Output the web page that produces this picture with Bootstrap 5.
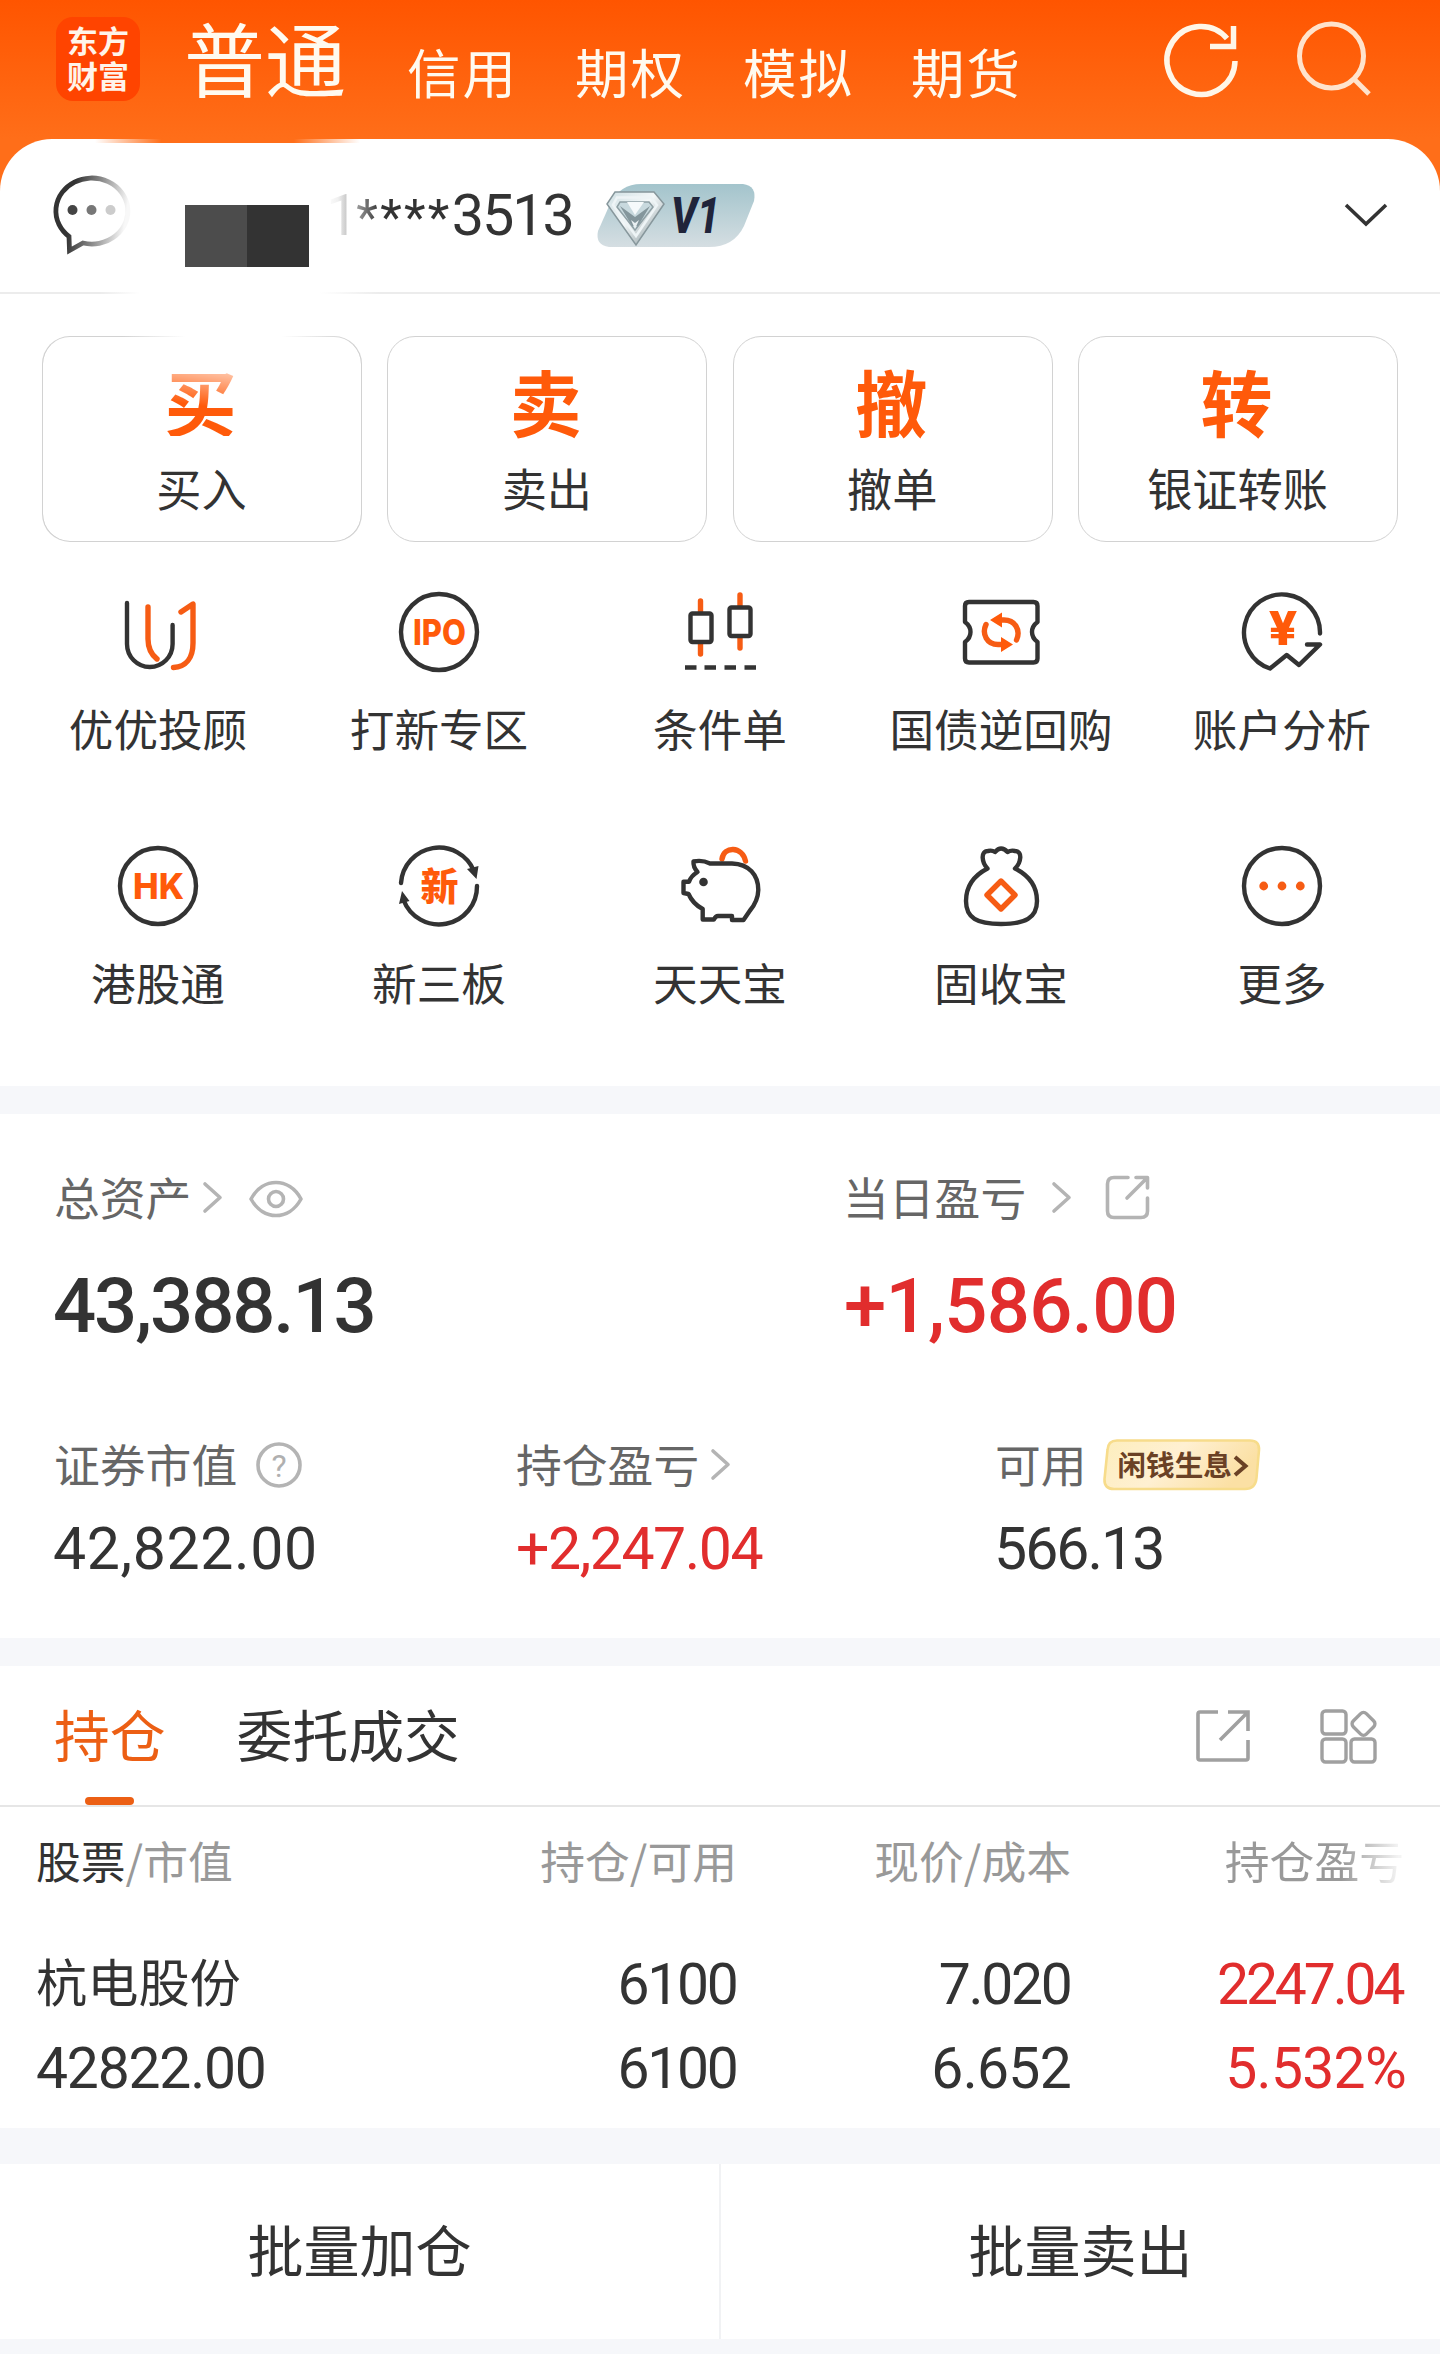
<!DOCTYPE html>
<html lang="zh-CN">
<head>
<meta charset="utf-8">
<meta name="viewport" content="width=device-width, initial-scale=1">
<title>东方财富 - 交易</title>
<link href="https://cdn.jsdelivr.net/npm/bootstrap@5.3.0/dist/css/bootstrap.min.css" rel="stylesheet">
<style>
:root{--ink:#333;--sub:#666;--mute:#999;--brand:#ff5a0a;--up:#e12d2d}
body{font-family:"Noto Sans CJK SC",Roboto,sans-serif;color:var(--ink);line-height:1;background:#fff}
svg{display:block;flex:none;overflow:visible}
.app{width:1440px;height:2354px;overflow:hidden;background:linear-gradient(#ff5500,#ff6e19 139px,#ff6e19 200px,#fff 201px)}
.num{font-family:Roboto,"Noto Sans CJK SC",sans-serif}
.up{color:var(--up)}
.topbar{height:139px;padding:0 68px 0 56px;color:#fffaf0}
.logo{width:84px;height:84px;border-radius:17px;background:#ff4400;margin-top:17px;font:700 31px/35px "Noto Sans CJK SC",sans-serif;color:#fff4ea;text-align:center;padding-top:5px}
.tab-main{font-size:81px;height:118px;line-height:112px;margin-left:44px;width:164px}
.tab-sub{font-size:53.500px;letter-spacing:2px;line-height:141px;width:111px;margin-left:57px;white-space:nowrap}
.tab-first{margin-left:59px}
.sheet{background:#fff;border-radius:52px 52px 0 0;position:relative}
.glow{position:absolute;left:95px;top:0;width:265px;height:4px;background:linear-gradient(90deg,transparent,#ff6e19 25%,#ff6e19 75%,transparent)}
.account{height:153px;padding:0 52px 0 52px}
.redact{width:124px;height:62px;background:linear-gradient(90deg,#4c4c4c 50%,#333 50%);margin:40px 0 0 55px}
.acct{font-size:57.5px;letter-spacing:-2px;line-height:155px;margin:2px 0 0 17px;background:linear-gradient(90deg,#fff 0,#f0f0f0 12px,#333 54px);-webkit-background-clip:text;background-clip:text;color:transparent}
.acct .stars{font-size:50px;letter-spacing:2.300px}
.rule{height:2px;background:linear-gradient(90deg,#ececec 100px,#fff 140px,#fff 320px,#ececec 380px)}
.actions{padding:41.500px 42px 0;gap:25.300px}
.act{flex:1 1 0;height:206px;border:1.5px solid #d2d2d2;border-radius:28px;text-align:center}
.act b{display:block;font-size:72px;line-height:72px;color:var(--brand);margin:27px 3px 0 0;font-weight:700}
.act span{display:block;font-size:45.200px;line-height:50px;margin-top:27px;white-space:nowrap;margin-right:1px}
.act.fade-top{background:linear-gradient(#fff,#fff) padding-box,linear-gradient(90deg,#d2d2d2 25%,#fff 45%,#fff 75%,#d2d2d2 95%) border-box;border-color:transparent #d2d2d2 #d2d2d2}
.fade-top b{background:linear-gradient(188deg,#ffe0d0 15%,#ff5a0a 55%);-webkit-background-clip:text;background-clip:text;color:transparent}
.tools{padding:0 17.5px;margin-top:46.500px;height:498px}
.tool{width:20%;height:254px;font-size:44.6px;text-align:center}
.tool div{line-height:50px;margin-top:26.500px;white-space:nowrap}
.tool svg{margin:0 auto}
.tool svg text{font-family:Inter,Roboto,sans-serif;font-weight:800;fill:#ff5a0a;stroke:none}
.tool svg text.cn{font-family:"Noto Sans CJK SC",sans-serif}
.d{fill:none;stroke:#333;stroke-width:4.4;stroke-linejoin:round;stroke-linecap:round}
.o{fill:none;stroke:#f65c14;stroke-width:5.4;stroke-linejoin:round;stroke-linecap:round}
.g{fill:none;stroke:#b4b4b4;stroke-width:3.6;stroke-linecap:round;stroke-linejoin:round}
.band{height:28px;background:#f6f7fa}
.assets{height:524px;padding:0 54px}
.lbl{font-size:45.800px;color:var(--sub);line-height:44px;height:50px;white-space:nowrap;padding-bottom:2px}
.lbl svg{margin-top:3px}
.big{font-size:76px;font-weight:500;line-height:80px;margin-top:44px}
.mid{font-size:59px;line-height:60px;margin-top:30px}
.c-a{width:790px}.c-1{width:462px}.c-2{width:480px}
.perk{width:157px;height:52px;margin-left:16px}
.perk text{font:700 28.6px "Noto Sans CJK SC",sans-serif;fill:#6a4125}
.tabs{height:141px;border-bottom:2px solid #e6e6e6;padding:0 62px 0 54px;font-size:55.800px}
.tabs .t{height:139px;line-height:133px;white-space:nowrap}
.t.on{color:#ec5f14;position:relative}
.t.on::after{content:"";position:absolute;left:31px;bottom:0;width:49px;height:8px;border-radius:4px;background:#ec5f14}
.hold{height:321px;padding:0 36px}
.hrow{display:grid;grid-template-columns:400px 301px 334px 333px;text-align:right;white-space:nowrap}
.hrow>:first-child{text-align:left}
.head{font-size:44.800px;line-height:50px;color:var(--mute);padding-top:28px}
.head .last{background:linear-gradient(90deg,#999 65%,#f4f4f4 97%);-webkit-background-clip:text;background-clip:text;color:transparent}
.lead-col{color:var(--ink)}
.vals{font-size:57px;line-height:60px}
.stock{font-size:51.200px;letter-spacing:0}
.k0{letter-spacing:-1.200px}
.k1{letter-spacing:-2.300px;margin-right:.500px}
.k2{letter-spacing:-3.100px;margin-right:1.500px}
.batch{height:175px;font-size:56px;line-height:168px}
.batch .col{text-align:center}
.batch .col+.col{border-left:2px solid #f1f2f4}
</style>
</head>
<body>
<div class="app">
  <header class="topbar d-flex align-items-start">
    <div class="logo">东方<br>财富</div>
    <div class="tab-main text-nowrap">普通</div>
    <div class="tab-sub tab-first">信用</div>
    <div class="tab-sub">期权</div>
    <div class="tab-sub">模拟</div>
    <div class="tab-sub">期货</div>
    <svg class="ms-auto mt-4" width="76" height="80" viewBox="0 3 76 80" fill="none" stroke="#fff6e8" stroke-width="5.5"><path d="M73 40A34 34 0 1 1 65 17.500"/><path d="M71.500 5V25.500H48"/></svg>
    <svg class="mt-4" width="76" height="80" viewBox="0 3 76 80" style="margin-left:58px" fill="none" stroke="#ffe3cc" stroke-width="5"><circle cx="35.500" cy="35" r="32"/><path d="M57 57L73 73"/></svg>
  </header>

  <main class="sheet">
    <div class="glow"></div>
    <section class="account d-flex align-items-center">
      <svg width="78" height="78" viewBox="0 0 78 78">
        <defs><linearGradient id="bubble" x1="0" y1="0" x2="78" y2="12" gradientUnits="userSpaceOnUse"><stop offset=".3" stop-color="#333"/><stop offset=".62" stop-color="#888"/><stop offset="1" stop-color="#f8f8f8"/></linearGradient></defs>
        <path d="M17 59.500A36 33 0 1 1 31 66L17.500 73.500Z" fill="none" stroke="url(#bubble)" stroke-width="4.800"/>
        <circle cx="20.500" cy="33" r="5" fill="#444"/><circle cx="39.500" cy="33" r="5" fill="#777"/><circle cx="58.500" cy="33" r="5" fill="#ccc"/>
      </svg>
      <div class="redact"></div>
      <div class="acct num">1<span class="stars">****</span>3513</div>
      <svg width="158" height="64" viewBox="0 0 158 64" style="margin-left:24px">
        <defs><linearGradient id="vip" x1="0" y1="0" x2="0" y2="1"><stop stop-color="#a3c4cc"/><stop offset="1" stop-color="#d5dee2"/></linearGradient><linearGradient id="gem" x1="0" y1="0" x2="1" y2="1"><stop stop-color="#cfdfe3"/><stop offset=".45" stop-color="#f4f8f9"/><stop offset="1" stop-color="#7f9095"/></linearGradient></defs>
        <path d="M44 0H146Q160 2 157 17L147 42Q137 63 112 63H12Q-2 61 1 47L13 20Q23 0 44 0Z" fill="url(#vip)"/>
        <path d="M18 8H57L67 20L39 61L10 20Z" fill="url(#gem)" stroke="#87979c" stroke-width="1.500"/>
        <path d="M20 13.500H54L60 21L39 52L16 21Z" fill="none" stroke="#eef4f6" stroke-width="2.500"/>
        <path d="M23 18H52L56 23L38 46L20 23Z" fill="#c8d9de" stroke="#8fa0a5" stroke-width="1.500"/>
        <path d="M23 22L38 33L53 22L41 42H35Z" fill="#84969c"/><path d="M30 18H47L38 31Z" fill="#f6fafb"/><path d="M34 36L38 39L42 36L38 45Z" fill="#e9f0f2"/>
        <text x="74" y="49" font-family="Roboto,sans-serif" font-style="italic" font-weight="800" font-size="49" fill="#20243a" textLength="49" lengthAdjust="spacingAndGlyphs">V1</text>
      </svg>
      <svg class="ms-auto" width="44" height="24" viewBox="0 0 44 24" style="margin-top:-2px"><path d="M2 2L22 21L42 2" fill="none" stroke="#333" stroke-width="3.600"/></svg>
    </section>
    <div class="rule"></div>

    <section class="actions d-flex">
      <div class="act fade-top"><b>买</b><span>买入</span></div>
      <div class="act"><b>卖</b><span>卖出</span></div>
      <div class="act"><b>撤</b><span>撤单</span></div>
      <div class="act"><b>转</b><span>银证转账</span></div>
    </section>

    <section class="tools d-flex flex-wrap">
      <div class="tool"><svg width="88" height="88" viewBox="0 0 88 88"><path class="o" d="M34 19V51Q34 64 43 71M67 24L79 16V55C79 70 72 79 59.500 79.500"/><path class="d" d="M13 15V56a22.800 23 0 0 0 45.600 0V37"/></svg><div>优优投顾</div></div>
      <div class="tool"><svg width="88" height="88" viewBox="0 0 88 88"><circle class="d" cx="44" cy="44" r="38"/><text x="18" y="56.500" font-size="35" textLength="53" lengthAdjust="spacingAndGlyphs">IPO</text></svg><div>打新专区</div></div>
      <div class="tool"><svg width="88" height="88" viewBox="0 0 88 88"><path class="o" d="M24.500 13V24M24.500 56V66M64 7V18M64 50V60"/><rect class="d" x="14.500" y="25.500" width="21" height="28.500" rx="2"/><rect class="d" x="53.500" y="19.500" width="21" height="28.500" rx="2"/><path d="M9 79.500H20.500M28.500 79.500H40M48.500 79.500H60M68.500 79.500H80" stroke="#333" stroke-width="4.600"/></svg><div>条件单</div></div>
      <div class="tool"><svg width="88" height="88" viewBox="0 0 88 88"><path class="d" d="M12 14H76.500Q80.500 14 80.500 18V34Q75 38 75 44T80.500 54V70.500Q80.500 74.500 76.500 74.500H12Q8 74.500 8 70.500V54Q13.500 50 13.500 44T8 34V18Q8 14 12 14Z"/><path class="o" d="M43 32H47C58 32 64 42 59.500 52M46 56.500H41C30 56.500 24.500 46 29 36.500"/><path d="M33 32L45 24.500V39.500ZM56 56.500L44 49V64Z" fill="#ff5a0a"/></svg><div>国债逆回购</div></div>
      <div class="tool"><svg width="88" height="88" viewBox="0 0 88 88"><path class="d" d="M82 45.500A38 38 0 1 0 32 80.500L48.700 67L61 77L82 56.500H69"/><text x="30.500" y="56.500" font-size="46" textLength="29" lengthAdjust="spacingAndGlyphs">¥</text></svg><div>账户分析</div></div>
      <div class="tool"><svg width="88" height="88" viewBox="0 0 88 88"><circle class="d" cx="44" cy="44" r="38"/><text x="19" y="56.500" font-size="35" textLength="51" lengthAdjust="spacingAndGlyphs">HK</text></svg><div>港股通</div></div>
      <div class="tool"><svg width="88" height="88" viewBox="0 0 88 88"><path class="d" d="M6 41A38 38 0 0 1 79 29M82 44A38 38 0 0 1 8.500 58"/><path d="M72 27L83.500 24L81.500 37ZM4 62L14.500 59L7 49Z" fill="#333"/><text class="cn" x="44.500" y="57.500" font-size="38" text-anchor="middle">新</text></svg><div>新三板</div></div>
      <div class="tool"><svg width="88" height="88" viewBox="0 0 88 88"><path class="o" d="M46 17C48 4 66 4 69.500 19"/><path class="d" d="M17.500 19.500Q26 17.500 34 21.500L56 21.500C73 22 82.300 33 82.300 48Q82 59 74 68.500L67.500 78H56V74H42Q39.500 74 38 77.500H26.700V67Q17 62 12.500 52L7.500 51V39.700H13Q15 34 21.500 30Q17 25 17.500 19.500Z"/><circle cx="27.500" cy="40" r="4.300" fill="#333"/></svg><div>天天宝</div></div>
      <div class="tool"><svg width="88" height="88" viewBox="0 0 88 88"><path class="d" d="M30.500 26.500C25 21 23 9 31 9Q35 8 38 10Q44 3 50.500 10Q54 8 58 9C66 9 64 21 58 26.500C73 34 80 45 80 59C80 76 68 82 44 82S9 76 9 59C9 45 16 34 30.500 26.500Z"/><path class="o" d="M44 39L58 53L44 67L30 53Z"/></svg><div>固收宝</div></div>
      <div class="tool"><svg width="88" height="88" viewBox="0 0 88 88"><circle class="d" cx="44" cy="44" r="38"/><g fill="#f65c14"><circle cx="25.700" cy="44" r="4.400"/><circle cx="44" cy="44" r="4.400"/><circle cx="62.300" cy="44" r="4.400"/></g></svg><div>更多</div></div>
    </section>

    <div class="band"></div>

    <section class="assets">
      <div class="d-flex" style="padding-top:58px">
        <div class="c-a">
          <div class="lbl d-flex align-items-center">总资产<svg width="20" height="32" viewBox="0 0 20 32" style="margin-left:12px"><path class="g" d="M2 2L17 15.500L2 29"/></svg><svg width="54" height="38" viewBox="0 0 54 38" style="margin-left:26px;margin-top:6px"><path class="g" d="M2 19C14-3 40-3 52 19C40 41 14 41 2 19Z"/><circle class="g" cx="27" cy="19" r="7.500"/></svg></div>
          <div class="big num" style="letter-spacing:-2.100px;margin-left:-1px">43,388.13</div>
        </div>
        <div>
          <div class="lbl d-flex align-items-center" style="margin-left:-1px">当日盈亏<svg width="20" height="32" viewBox="0 0 20 32" style="margin-left:26px"><path class="g" d="M2 2L17 15.500L2 29"/></svg><svg width="45" height="45" viewBox="0 0 45 45" style="margin-left:33px"><path class="g" d="M23 2.500H9Q2.500 2.500 2.500 9V36Q2.500 42.500 9 42.500H36Q42.500 42.500 42.500 36V23M31 2.500H42.500V13M41 4L22 23"/></svg></div>
          <div class="big num up" style="letter-spacing:-.700px">+1,586.00</div>
        </div>
      </div>
      <div class="d-flex" style="padding-top:93px">
        <div class="c-1">
          <div class="lbl d-flex align-items-center">证券市值<svg width="46" height="46" viewBox="0 0 46 46" style="margin-left:19px"><circle class="g" cx="23" cy="23" r="21"/><text x="23" y="34.500" font-family="Roboto,sans-serif" font-size="32" fill="#b0b0b0" text-anchor="middle">?</text></svg></div>
          <div class="mid num" style="letter-spacing:.600px;margin-left:-1px">42,822.00</div>
        </div>
        <div class="c-2">
          <div class="lbl d-flex align-items-center">持仓盈亏<svg width="20" height="32" viewBox="0 0 20 32" style="margin-left:12px"><path class="g" d="M2 2L17 15.500L2 29"/></svg></div>
          <div class="mid num up" style="letter-spacing:-1.500px">+2,247.04</div>
        </div>
        <div>
          <div class="lbl d-flex align-items-center" style="margin-left:-1px">可用<svg class="perk" viewBox="0 0 157 52"><defs><linearGradient id="gold" x1="0" y1="0" x2="1" y2=".3"><stop stop-color="#fdeebd"/><stop offset=".5" stop-color="#fff0d2"/><stop offset="1" stop-color="#fbe0a4"/></linearGradient></defs><path d="M14 1.500H147Q156.500 1.500 156 11L153.500 39Q152.500 50 142 50H11Q1 50 1.500 40L4.500 11Q5 1.500 14 1.500Z" fill="url(#gold)" stroke="#f7dc8b" stroke-width="2.600"/><text x="14.500" y="37">闲钱生息</text><path d="M132 18L142.500 27L132 36" fill="none" stroke="#6a4125" stroke-width="4"/></svg></div>
          <div class="mid num" style="letter-spacing:-2px;margin-left:-2px">566.13</div>
        </div>
      </div>
    </section>

    <div class="band"></div>

    <nav class="tabs d-flex align-items-center">
      <div class="t on">持仓</div>
      <div class="t" style="margin-left:71px">委托成交</div>
      <svg class="ms-auto" width="54" height="54" viewBox="0 0 54 54" fill="none" stroke="#a0a0a0" stroke-width="3.600"><path d="M22 3H4Q2 3 2 5V49Q2 51 4 51H50Q52 51 52 49V31M32 3H52V22M51 4L24 31"/></svg>
      <svg width="58" height="56" viewBox="0 0 58 56" style="margin-left:70px" fill="none" stroke="#a0a0a0" stroke-width="3.400"><rect x="2" y="3" width="24" height="23" rx="3.500"/><rect x="2" y="31" width="24" height="23" rx="3.500"/><rect x="31" y="31" width="24" height="23" rx="3.500"/><rect x="-9" y="-9" width="18.500" height="18.500" rx="4" transform="translate(43.500 15.500) rotate(45)"/></svg>
    </nav>

    <section class="hold">
      <div class="hrow head"><div><span class="lead-col">股票</span>/市值</div><div>持仓/可用</div><div>现价/成本</div><div><span class="last">持仓盈亏</span></div></div>
      <div class="hrow vals num" style="padding-top:70px"><div class="stock">杭电股份</div><div class="k1">6100</div><div class="k1">7.020</div><div class="up k2">2247.04</div></div>
      <div class="hrow vals num" style="padding-top:24px"><div class="k0">42822.00</div><div class="k1">6100</div><div style="letter-spacing:-.700px">6.652</div><div class="up" style="letter-spacing:-.700px;margin-right:-2px">5.532%</div></div>
    </section>

    <div class="band" style="height:36px"></div>
    <section class="batch row g-0"><div class="col">批量加仓</div><div class="col">批量卖出</div></section>
    <div class="band"></div>
  </main>
</div>
<script src="https://cdn.jsdelivr.net/npm/bootstrap@5.3.0/dist/js/bootstrap.bundle.min.js"></script>
</body>
</html>
